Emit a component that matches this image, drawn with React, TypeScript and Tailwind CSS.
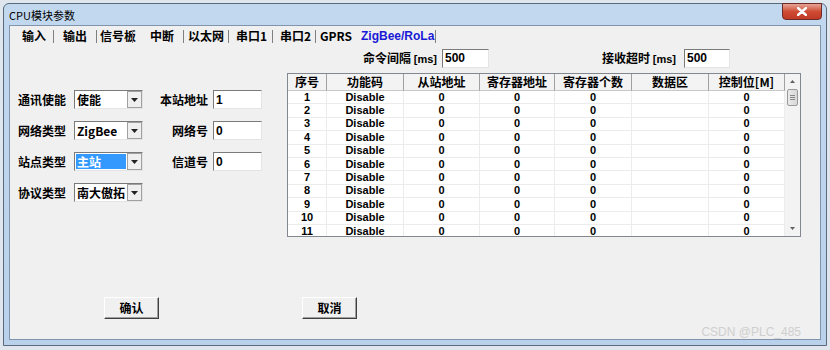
import React from "react";

const cjk = { fontFamily: '"Noto Sans CJK SC", "Liberation Sans", sans-serif' };
const lat = { fontFamily: '"Liberation Sans", "Noto Sans CJK SC", sans-serif' };

function Select({ value, selected }: { value: string; selected?: boolean }) {
  return (
    <div className="flex h-[19px] w-[69px] border border-t-[#7a7a7a] border-l-[#7a7a7a] border-b-[#e4e4e4] border-r-[#e4e4e4] bg-white">
      <div className="flex flex-1 items-center px-[1px] py-[1px]">
        <div
          className={
            "flex h-full flex-1 items-center pl-[1px] text-[12px] font-bold " +
            (selected ? "bg-[#3399ff] text-white" : "text-black")
          }
          style={cjk}
        >
          {value}
        </div>
      </div>
      <div className="flex w-[15px] items-center justify-center border border-[#a0a0a0] bg-[#efefef]">
        <svg width="7" height="4" viewBox="0 0 7 4">
          <path d="M0 0h7L3.5 4z" fill="#222" />
        </svg>
      </div>
    </div>
  );
}

function Input({ value, w = "w-[49px]" }: { value: string; w?: string }) {
  return (
    <div
      className={
        "flex h-[19px] items-center border border-t-[#7a7a7a] border-l-[#7a7a7a] border-b-[#e4e4e4] border-r-[#e4e4e4] bg-white pl-[2px] text-[12px] font-bold text-black " +
        w
      }
      style={lat}
    >
      {value}
    </div>
  );
}

function Button({ label }: { label: string }) {
  return (
    <div
      className="flex h-[22px] w-[55px] items-center justify-center border border-t-white border-l-white border-b-[#404040] border-r-[#404040] bg-[#f0f0f0] text-[12px] font-bold text-black shadow-[inset_-1px_-1px_0_#a0a0a0]"
      style={cjk}
    >
      {label}
    </div>
  );
}

const tabs: { t: string; w: string; sp: string; sep: boolean; blue?: boolean }[] = [
  { t: "输入", w: "w-[31px]", sp: "w-[9px]", sep: true },
  { t: "输出", w: "w-[33px]", sp: "w-[3px]", sep: true },
  { t: "信号板", w: "w-[32px]", sp: "w-[17px]", sep: true },
  { t: "中断", w: "w-[33px]", sp: "w-[4px]", sep: true },
  { t: "以太网", w: "w-[40px]", sp: "w-[7px]", sep: true },
  { t: "串口1", w: "w-[36px]", sp: "w-[7px]", sep: true },
  { t: "串口2", w: "w-[35px]", sp: "w-[4px]", sep: true },
  { t: "GPRS", w: "w-[41px]", sp: "w-[0px]", sep: false },
  { t: "ZigBee/RoLa", w: "w-[74px]", sp: "w-[0px]", sep: true, blue: true },
];

const cols = [
  { t: "序号", w: "w-[39px]" },
  { t: "功能码", w: "w-[77px]" },
  { t: "从站地址", w: "w-[76px]" },
  { t: "寄存器地址", w: "w-[75px]" },
  { t: "寄存器个数", w: "w-[77px]" },
  { t: "数据区", w: "w-[77px]" },
  { t: "控制位[M]", w: "w-[76px]" },
];

function MsLabel({ text, w }: { text: string; w: string }) {
  return (
    <div className={"whitespace-nowrap text-[12px] font-bold text-black " + w} style={cjk}>
      {text}{" "}
      <span className="text-[11px]" style={lat}>
        [ms]
      </span>
    </div>
  );
}

export default function App() {
  const rows = Array.from({ length: 11 }, (_, i) => [String(i + 1), "Disable", "0", "0", "0", "", "0"]);
  return (
    <div className="h-[350px] w-[830px] overflow-hidden bg-[#dfe6ee] pl-[3px] pt-[3px]">
      <div className="flex h-[343px] w-[824px] flex-col rounded-t-[6px] border border-[#5a6a7c] bg-gradient-to-b from-[#c2d8ef] to-[#b9d1ea] px-[5px] pb-[5px]">
        {/* title bar */}
        <div className="flex h-[21px] items-start">
          <div className="mt-[3px] text-[11px] text-black" style={cjk}>
            CPU模块参数
          </div>
          <div className="flex-1" />
          <div className="mr-[-1px] mt-[-1px] flex h-[17px] w-[40px] items-center justify-center rounded-b-[4px] border border-[#6d2b25] bg-gradient-to-b from-[#e6a396] via-[#cf4b33] to-[#c03a26]">
            <svg width="10" height="9" viewBox="0 0 10 9">
              <path d="M1 1l8 7M9 1l-8 7" stroke="#fff" strokeWidth="2.4" strokeLinecap="round" />
            </svg>
          </div>
        </div>
        {/* client area */}
        <div className="flex flex-1 flex-col border border-[#8094ad] bg-[#f0f0f0]">
          {/* tabs */}
          <div className="flex h-[19px] items-center pl-[12px] pt-[1px]">
            {tabs.map((tb, i) => (
              <div key={i} className="flex items-center">
                <div
                  className={
                    "whitespace-nowrap text-[12px] font-bold " +
                    tb.w +
                    " " +
                    (tb.blue ? "text-[#1a1ad6]" : "text-black")
                  }
                  style={tb.blue ? lat : cjk}
                >
                  {tb.t}
                </div>
                {tb.sep && <div className="h-[13px] w-[1px] bg-[#808080]" />}
                <div className={tb.sp} />
              </div>
            ))}
          </div>
          {/* intervals */}
          <div className="mt-[3px] flex h-[20px] items-center">
            <div className="w-[353px]" />
            <MsLabel text="命令间隔" w="w-[79px]" />
            <Input value="500" w="w-[47px]" />
            <div className="w-[113px]" />
            <MsLabel text="接收超时" w="w-[82px]" />
            <Input value="500" w="w-[46px]" />
          </div>
          <div className="mt-[5px] flex">
            {/* left form */}
            <div className="w-[277px] pl-[8px] pt-[17px]">
              {[
                { l: "通讯使能", v: "使能", r: "本站地址", rv: "1" },
                { l: "网络类型", v: "ZigBee", r: "网络号", rv: "0" },
                { l: "站点类型", v: "主站", r: "信道号", rv: "0", sel: true },
                { l: "协议类型", v: "南大傲拓" },
              ].map((row, i) => (
                <div key={i} className="mb-[12px] flex h-[19px] items-center">
                  <div className="w-[56px] text-[12px] font-bold text-black" style={cjk}>
                    {row.l}
                  </div>
                  <Select value={row.v} selected={row.sel} />
                  {row.r && (
                    <>
                      <div
                        className="w-[70px] pr-[5px] text-right text-[12px] font-bold text-black"
                        style={cjk}
                      >
                        {row.r}
                      </div>
                      <Input value={row.rv!} />
                    </>
                  )}
                </div>
              ))}
            </div>
            {/* table */}
            <div className="flex h-[164px] w-[514px] overflow-hidden border border-[#828790] bg-white">
              <div className="flex flex-col">
                <div className="flex h-[17px] shrink-0 bg-[#f3f3f3]">
                  {cols.map((c, i) => (
                    <div
                      key={i}
                      className={
                        "flex items-center justify-center border-b border-r border-b-[#c8c8c8] border-r-[#a0a0a0] text-[12px] font-bold text-black " +
                        c.w
                      }
                      style={cjk}
                    >
                      {c.t}
                    </div>
                  ))}
                </div>
                {rows.map((r, ri) => (
                  <div key={ri} className="flex h-[13.4px] shrink-0">
                    {r.map((v, ci) => (
                      <div
                        key={ci}
                        className={
                          "flex items-center justify-center border-b border-r border-[#ececec] text-[11px] font-bold leading-none text-black " +
                          cols[ci].w
                        }
                        style={lat}
                      >
                        {v}
                      </div>
                    ))}
                  </div>
                ))}
              </div>
              {/* scrollbar */}
              <div className="flex w-[16px] flex-col items-center bg-[#f3f3f3]">
                <div className="flex h-[15px] items-center justify-center">
                  <svg width="5" height="3" viewBox="0 0 5 3">
                    <path d="M0 3h5L2.5 0z" fill="#606060" />
                  </svg>
                </div>
                <div className="flex h-[17px] w-[11px] flex-col items-center justify-center gap-[1px] rounded-[2px] border border-[#9a9a9a] bg-gradient-to-r from-[#eaeaea] to-[#d8d8d8]">
                  <div className="h-[1px] w-[5px] bg-[#888]" />
                  <div className="h-[1px] w-[5px] bg-[#888]" />
                  <div className="h-[1px] w-[5px] bg-[#888]" />
                </div>
                <div className="flex-1" />
                <div className="flex h-[15px] items-center justify-center">
                  <svg width="5" height="3" viewBox="0 0 5 3">
                    <path d="M0 0h5L2.5 3z" fill="#606060" />
                  </svg>
                </div>
              </div>
            </div>
          </div>
          {/* buttons */}
          <div className="mt-[60px] flex">
            <div className="w-[94px]" />
            <Button label="确认" />
            <div className="w-[143px]" />
            <Button label="取消" />
          </div>
          <div className="flex flex-1 items-end justify-end pb-[1px] pr-[19px]">
            <div className="text-[12px] leading-none text-[#cfcfcf]" style={lat}>
              CSDN @PLC_485
            </div>
          </div>
        </div>
      </div>
    </div>
  );
}
